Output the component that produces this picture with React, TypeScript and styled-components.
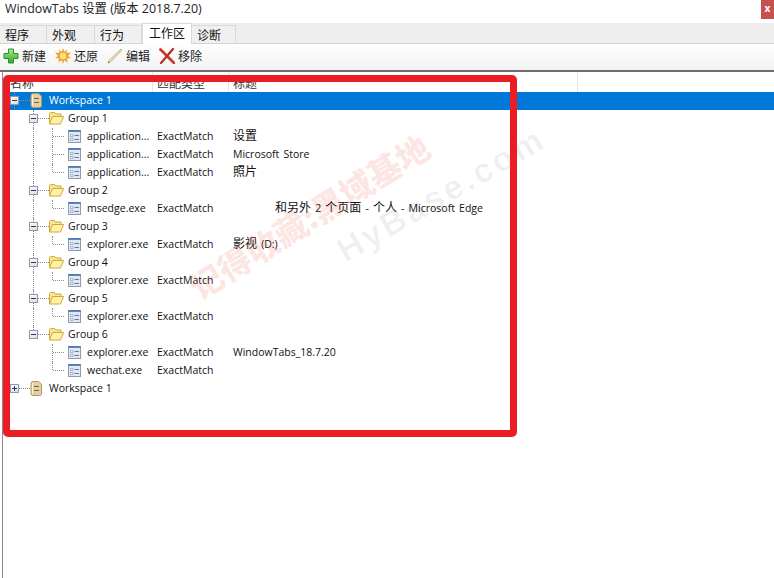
import React from "react";
import styled, { createGlobalStyle } from "styled-components";

const GlobalStyle = createGlobalStyle`
  html, body {
    margin: 0;
    padding: 0;
    background: #fff;
  }
`;

const FONT = `Tahoma, "Open Sans", "Noto Sans", "Noto Sans CJK SC", sans-serif`;
const CELL = 19;

// Data
type Guide = "none" | "line" | "tee" | "corner" | "minus" | "minusEnd" | "plus";

interface Row {
  kind: "workspace" | "group" | "leaf";
  guides: Guide[];
  name: string;
  match?: string;
  title?: string;
  indent?: boolean;
  selected?: boolean;
}

const leaf = (outer: Guide, inner: Guide, name: string, title = ""): Row => ({
  kind: "leaf",
  guides: ["none", outer, inner],
  name,
  match: "ExactMatch",
  title,
});

const group = (name: string, last = false): Row => ({
  kind: "group",
  guides: ["none", last ? "minusEnd" : "minus"],
  name,
});

const rows: Row[] = [
  { kind: "workspace", guides: ["minus"], name: "Workspace 1", selected: true },
  group("Group 1"),
  leaf("line", "tee", "application...", "设置"),
  leaf("line", "tee", "application...", "Microsoft Store"),
  leaf("line", "corner", "application...", "照片"),
  group("Group 2"),
  { ...leaf("line", "corner", "msedge.exe", "和另外 2 个页面 - 个人 - Microsoft Edge"), indent: true },
  group("Group 3"),
  leaf("line", "corner", "explorer.exe", "影视 (D:)"),
  group("Group 4"),
  leaf("line", "corner", "explorer.exe"),
  group("Group 5"),
  leaf("line", "corner", "explorer.exe"),
  group("Group 6", true),
  leaf("none", "tee", "explorer.exe", "WindowTabs_18.7.20"),
  leaf("none", "corner", "wechat.exe"),
  { kind: "workspace", guides: ["plus"], name: "Workspace 1" },
];

const tabs = [
  { label: "程序", width: 47 },
  { label: "外观", width: 48 },
  { label: "行为", width: 47 },
  { label: "工作区", width: 50, active: true },
  { label: "诊断", width: 44 },
];

// Styled components
const Page = styled.div`
  position: relative;
  width: 774px;
  height: 578px;
  overflow: hidden;
  background: #fff;
  color: #111;
  font-family: ${FONT};
  font-size: 10.5px;
`;

const TitleBar = styled.div`
  height: 23px;
  display: flex;
  justify-content: space-between;
  align-items: flex-start;
  padding-left: 5px;
`;

const TitleText = styled.div`
  font-size: 12.4px;
  line-height: 17px;
  color: #222;
`;

const CloseButton = styled.div`
  width: 13px;
  height: 19px;
  background: #c75050;
  color: #fff;
  font-size: 10px;
  font-weight: 700;
  line-height: 17px;
  text-align: center;
`;

const TabStrip = styled.div`
  height: 20px;
  display: flex;
  align-items: flex-end;
  background: #eeeeee;
  border-bottom: 1px solid #d4d4d4;
`;

const Tab = styled.div<{ $active?: boolean; $width: number }>`
  box-sizing: border-box;
  width: ${(p) => p.$width}px;
  height: ${(p) => (p.$active ? 21 : 18)}px;
  margin-bottom: ${(p) => (p.$active ? -1 : 0)}px;
  padding-left: ${(p) => (p.$active ? 6 : 5)}px;
  border: 1px solid #d9d9d9;
  border-bottom: none;
  border-left: ${(p) => (p.$active ? "1px solid #d9d9d9" : "none")};
  background: ${(p) => (p.$active ? "#fff" : "#f0f0f0")};
  font-size: 12px;
  line-height: 19px;
`;

const Toolbar = styled.div`
  box-sizing: border-box;
  height: 28px;
  display: flex;
  align-items: center;
  padding: 0 0 2px 3px;
  gap: 9px;
  background: linear-gradient(#ffffff, #f2f2f2);
  border-bottom: 2px solid #6d6d6d;
`;

const ToolButton = styled.div`
  display: flex;
  align-items: center;
  gap: 3px;
  font-size: 12px;
  color: #222;
`;

const List = styled.div`
  height: 507px;
  margin-left: 2px;
  border-left: 1px solid #8a8a8a;
`;

const HeaderRow = styled.div`
  height: 20px;
  display: grid;
  grid-template-columns: 150px 76px 349px;
  font-size: 12px;
  line-height: 17px;
`;

const HeaderCell = styled.div`
  box-sizing: border-box;
  padding: 3px 0 0 4px;
  overflow: hidden;
  border-right: 1px solid #e5e5e5;
  color: #333;
  &:first-child {
    padding-left: 7px;
  }
`;

const TreeRow = styled.div<{ $selected?: boolean }>`
  height: 18px;
  display: grid;
  grid-template-columns: 150px 76px 1fr;
  align-items: start;
  line-height: 16px;
  background: ${(p) => (p.$selected ? "#0078d7" : "transparent")};
  color: ${(p) => (p.$selected ? "#fff" : "#111")};
`;

const NameCell = styled.div`
  height: 18px;
  display: flex;
  align-items: flex-start;
  padding-left: 2px;
  white-space: nowrap;
`;

const GuideCell = styled.div<{ $guide: Guide }>`
  position: relative;
  flex: none;
  width: ${CELL}px;
  height: 18px;

  /* dotted vertical line */
  &::before {
    content: "";
    display: ${(p) => (p.$guide === "none" || p.$guide === "plus" ? "none" : "block")};
    position: absolute;
    left: 9px;
    top: 0;
    height: ${(p) => (p.$guide === "corner" || p.$guide === "minusEnd" ? 8 : 18)}px;
    border-left: 1px dotted #8c8c8c;
  }

  /* dotted horizontal line */
  &::after {
    content: "";
    display: ${(p) => (p.$guide === "none" || p.$guide === "line" ? "none" : "block")};
    position: absolute;
    left: 10px;
    top: 8px;
    width: ${(p) => (p.$guide === "tee" || p.$guide === "corner" ? 11 : 15)}px;
    border-top: 1px dotted #8c8c8c;
  }
`;

const ExpanderBox = styled.div`
  position: absolute;
  z-index: 1;
  left: 5px;
  top: 4px;
  width: 9px;
  height: 9px;
  box-sizing: border-box;
  border: 1px solid #8c9bb0;
  background: linear-gradient(135deg, #fff, #dcdcd4);
`;

const ExpanderBar = styled.div<{ $vertical?: boolean }>`
  position: absolute;
  background: #22367a;
  left: ${(p) => (p.$vertical ? 3 : 1)}px;
  top: ${(p) => (p.$vertical ? 1 : 3)}px;
  width: ${(p) => (p.$vertical ? 1 : 5)}px;
  height: ${(p) => (p.$vertical ? 5 : 1)}px;
`;

const IconSlot = styled.div`
  position: relative;
  z-index: 1;
  flex: none;
  width: 25px;
  height: 16px;
  padding-left: 6px;
  box-sizing: border-box;
  display: flex;
  align-items: center;
`;

const Cell = styled.div`
  padding-left: 4px;
  white-space: nowrap;
`;

const TitleCell = styled(Cell)<{ $indent?: boolean }>`
  padding-left: ${(p) => (p.$indent ? 46 : 4)}px;
  word-spacing: 1.4px;
`;

const CjkText = styled.span`
  font-family: "Noto Sans CJK SC", sans-serif;
  font-size: 12px;
  line-height: 14px;
`;

const Highlight = styled.div`
  position: absolute;
  left: 3px;
  top: 75px;
  width: 514px;
  height: 362px;
  box-sizing: border-box;
  border: 7px solid #ed1c24;
  border-radius: 5px;
  pointer-events: none;
`;

const WatermarkRed = styled.div`
  position: absolute;
  left: 171px;
  top: 192px;
  transform: rotate(-32deg);
  font-family: "Noto Sans CJK SC", sans-serif;
  font-size: 33px;
  font-weight: 900;
  white-space: nowrap;
  color: rgba(237, 60, 40, 0.12);
  pointer-events: none;
`;

const WatermarkGrey = styled.div`
  position: absolute;
  left: 324px;
  top: 175px;
  transform: rotate(-30deg);
  font-family: "Liberation Sans", sans-serif;
  font-size: 34px;
  font-weight: 700;
  letter-spacing: 3px;
  white-space: nowrap;
  color: rgba(0, 0, 0, 0.06);
  pointer-events: none;
`;

// Icons
const PlusIcon = () => (
  <svg width="16" height="16" viewBox="0 0 16 16">
    <defs>
      <linearGradient id="plusFill" x1="0" y1="0" x2="0" y2="1">
        <stop offset="0" stopColor="#a6e88a" />
        <stop offset="1" stopColor="#2fae2f" />
      </linearGradient>
    </defs>
    <path d="M5.500 1h5v4.500H15v5h-4.500V15h-5v-4.500H1v-5h4.500z" fill="url(#plusFill)" stroke="#2f8f2f" />
  </svg>
);

const SunIcon = () => (
  <svg width="16" height="16" viewBox="0 0 16 16">
    <path
      d="M8 0l1.300 4L12 1.500l-.3 3.400 4.300-.4-3 3.500 3 2-4 .6.600 3.900-3.400-2.300L8 16l-1.200-3.800-3.400 2.300.6-3.900-4-.6 3-2-3-3.500 4.300.4L4 1.500 6.700 4z"
      fill="#f3a22c"
    />
    <circle cx="8" cy="8" r="3.200" fill="#fde28a" />
  </svg>
);

const PencilIcon = () => (
  <svg width="16" height="16" viewBox="0 0 16 16">
    <path d="M14 1l1 1L3.500 14l-2.500 1 1-2.500z" fill="#f3e2b8" stroke="#b39a68" strokeWidth="0.700" />
    <path d="M1 15l.5-1.500 1 1z" fill="#555" />
  </svg>
);

const RemoveIcon = () => (
  <svg width="16" height="16" viewBox="0 0 16 16">
    <path d="M1.500 1.500L15 15" stroke="#c93a2e" strokeWidth="2.800" strokeLinecap="round" />
    <path d="M14 1L2 15" stroke="#b52f25" strokeWidth="2.200" strokeLinecap="round" />
  </svg>
);

const WorkspaceIcon = () => (
  <svg width="13" height="15" viewBox="0 0 13 15">
    <path d="M3 .5h5.500l3 2.500v9.500a2 2 0 0 1-2 2H3a2 2 0 0 1-2-2v-10a2 2 0 0 1 2-2z" fill="#e6d0a2" stroke="#b0976c" />
    <path d="M4 5.500h5M4 9.500h5" stroke="#75633f" strokeWidth="1.200" />
    <path d="M2.500 2v11" stroke="#fbf3dc" />
  </svg>
);

const FolderIcon = () => (
  <svg width="15" height="14" viewBox="0 0 15 14">
    <path d="M.500 13V2.500l1-1h4l1 1.500h5.500v2" fill="#fde68f" stroke="#cfa937" />
    <path d="M.500 13l3-7.500h11l-3 7.500z" fill="#fff1a8" stroke="#cfa937" />
  </svg>
);

const LeafIcon = () => (
  <svg width="13" height="13" viewBox="0 0 13 13">
    <rect x="0.500" y="0.500" width="12" height="12" fill="#e4e8ee" stroke="#8f9bb0" />
    <path d="M.5 1h12" stroke="#3f6cb5" strokeWidth="1.600" />
    <path d="M2.500 4.500h2.500v2h-2.500zM2.500 8.500h2.500v2h-2.500z" fill="#fff" stroke="#7f9bc8" strokeWidth="0.700" />
    <path d="M6.500 5.500h4.500M6.500 9.500h4.500" stroke="#5a7db5" strokeWidth="1.200" />
  </svg>
);

const icons = {
  workspace: <WorkspaceIcon />,
  group: <FolderIcon />,
  leaf: <LeafIcon />,
};

const GuideView = ({ guide }: { guide: Guide }) => (
  <GuideCell $guide={guide}>
    {(guide === "minus" || guide === "minusEnd" || guide === "plus") && (
      <ExpanderBox>
        <ExpanderBar />
        {guide === "plus" && <ExpanderBar $vertical />}
      </ExpanderBox>
    )}
  </GuideCell>
);

// Chinese runs are drawn a bit larger than the latin text, as in the tree control
const MixedText = ({ text }: { text: string }) => (
  <>
    {text.split(/([\u4e00-\u9fff]+)/).map((part, i) =>
      /[\u4e00-\u9fff]/.test(part) ? <CjkText key={i}>{part}</CjkText> : part
    )}
  </>
);

const App = () => {
  return (
    <Page>
      <GlobalStyle />
      <TitleBar>
        <TitleText>WindowTabs 设置 (版本 2018.7.20)</TitleText>
        <CloseButton>x</CloseButton>
      </TitleBar>
      <TabStrip>
        {tabs.map((tab) => (
          <Tab key={tab.label} $active={tab.active} $width={tab.width}>
            {tab.label}
          </Tab>
        ))}
      </TabStrip>
      <Toolbar>
        <ToolButton><PlusIcon />新建</ToolButton>
        <ToolButton><SunIcon />还原</ToolButton>
        <ToolButton><PencilIcon />编辑</ToolButton>
        <ToolButton><RemoveIcon />移除</ToolButton>
      </Toolbar>
      <List>
        <HeaderRow>
          <HeaderCell>名称</HeaderCell>
          <HeaderCell>匹配类型</HeaderCell>
          <HeaderCell>标题</HeaderCell>
        </HeaderRow>
        {rows.map((row, i) => (
          <TreeRow key={i} $selected={row.selected}>
            <NameCell>
              {row.guides.map((g, j) => (
                <GuideView key={j} guide={g} />
              ))}
              <IconSlot>{icons[row.kind]}</IconSlot>
              {row.name}
            </NameCell>
            <Cell>{row.match}</Cell>
            <TitleCell $indent={row.indent}>
              {row.title && <MixedText text={row.title} />}
            </TitleCell>
          </TreeRow>
        ))}
      </List>
      <WatermarkRed>记得收藏:黑域基地</WatermarkRed>
      <WatermarkGrey>HyBase.com</WatermarkGrey>
      <Highlight />
    </Page>
  );
};

export default App;
